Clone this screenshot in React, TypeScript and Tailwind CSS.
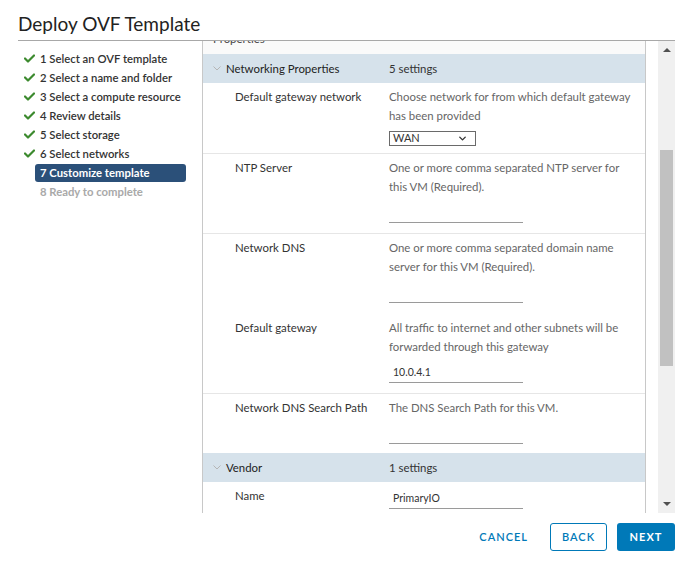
import { ChevronDown } from 'lucide-react';

const steps = [
  { label: '1 Select an OVF template', state: 'done' },
  { label: '2 Select a name and folder', state: 'done' },
  { label: '3 Select a compute resource', state: 'done' },
  { label: '4 Review details', state: 'done' },
  { label: '5 Select storage', state: 'done' },
  { label: '6 Select networks', state: 'done' },
  { label: '7 Customize template', state: 'active' },
  { label: '8 Ready to complete', state: 'todo' },
];

const Check = () => (
  <svg width="11" height="9" viewBox="0 0 11 9" fill="none">
    <path d="M1 4.5 L4 7.5 L10 1.5" stroke="#3c8a2e" strokeWidth="2.2" strokeLinecap="round" strokeLinejoin="round" />
  </svg>
);

const Caret = () => (
  <svg width="8" height="5" viewBox="0 0 8 5" fill="none" className="mr-[5px]">
    <path d="M0.5 0.5 L4 4 L7.5 0.5" stroke="#b5b5b5" strokeWidth="1" />
  </svg>
);

const Band = ({ title, count }: { title: string; count: string }) => (
  <div className="flex h-[29px] items-center bg-[#d6e2eb] text-[11.4px] text-[#222]">
    <div className="flex w-[186px] items-center pl-[10px]">
      <Caret />
      <span>{title}</span>
    </div>
    <span className="text-[#333]">{count}</span>
  </div>
);

const Input = ({ value }: { value?: string }) => (
  <div className="flex h-[20px] w-[134px] items-center border-b border-[#9a9a9a] pl-[4px] text-[10.5px] text-[#333]">
    {value}
  </div>
);

const Row = ({
  label,
  desc,
  value,
  line = true,
}: {
  label: string;
  desc: string[];
  value?: string;
  line?: boolean;
}) => (
  <div className={`flex pt-[4px] pb-[10px] ${line ? 'border-b border-[#e6e6e6]' : 'border-b border-transparent'}`}>
    <div className="w-[186px] pl-[32px] text-[11.4px] leading-[19px] text-[#333]">{label}</div>
    <div className="flex-1">
      <div className="text-[11.4px] leading-[19px] text-[#666]">
        {desc.map((d) => (
          <div key={d} className="whitespace-nowrap">
            {d}
          </div>
        ))}
      </div>
      <div className="mt-[7px]">
        <Input value={value} />
      </div>
    </div>
  </div>
);

export default function App() {
  return (
    <div className="relative h-[563px] w-[685px] overflow-hidden bg-white font-['Lato',sans-serif]">
      <div className="pl-[18px] pt-[12px] text-[19px] leading-[24px] text-[#222]">Deploy OVF Template</div>

      <div className="ml-[18px] mr-[10px] mt-[4px] border-t border-[#a8a8a8]" />

      <div className="flex h-[472px]">
        {/* Steps */}
        <div className="w-[202px] shrink-0 pl-[18px] pt-[8px]">
          {steps.map((s) => (
            <div key={s.label} className="flex h-[19px] items-center whitespace-nowrap">
              <div className="flex w-[17px] items-center pl-[6px]">{s.state === 'done' && <Check />}</div>
              <div
                className={
                  s.state === 'active'
                    ? 'w-[151px] rounded-[3px] bg-[#2b5079] px-[5px] text-[11.3px] font-bold leading-[18px] text-white'
                    : s.state === 'todo'
                    ? 'px-[5px] text-[11.3px] font-bold leading-[18px] text-[#a9a9a9]'
                    : 'px-[5px] text-[11.3px] font-semibold leading-[18px] text-[#333]'
                }
              >
                {s.label}
              </div>
            </div>
          ))}
        </div>

        {/* Properties panel */}
        <div className="w-[444px] shrink-0 overflow-hidden border-x border-[#c8c8c8]">
          <div className="h-[13px] overflow-hidden bg-[#fafafa] pl-[10px]">
            <div className="-mt-[12px] text-[11.4px] leading-[19px] text-[#444]">Properties</div>
          </div>
          <Band title="Networking Properties" count="5 settings" />

          <div className="flex border-b border-[#e6e6e6] pt-[4px] pb-[7px]">
            <div className="w-[186px] pl-[32px] text-[11.4px] leading-[19px] text-[#333]">Default gateway network</div>
            <div className="flex-1">
              <div className="text-[11.4px] leading-[19px] text-[#666]">
                <div>Choose network for from which default gateway</div>
                <div>has been provided</div>
              </div>
              <div className="mt-[6px] flex h-[15px] w-[87px] items-center justify-between border border-[#6a6a6a] pl-[3px] pr-[7px] text-[11px] text-[#333]">
                <span>WAN</span>
                <ChevronDown size={11} strokeWidth={3} className="text-[#333]" />
              </div>
            </div>
          </div>

          <Row label="NTP Server" desc={['One or more comma separated NTP server for', 'this VM (Required).']} />
          <Row
            label="Network DNS"
            desc={['One or more comma separated domain name', 'server for this VM (Required).']}
            line={false}
          />
          <Row
            label="Default gateway"
            desc={['All traffic to internet and other subnets will be', 'forwarded through this gateway']}
            value="10.0.4.1"
          />
          <div className="flex pt-[4px] pb-[9px]">
            <div className="w-[186px] pl-[32px] text-[11.4px] leading-[19px] text-[#333]">Network DNS Search Path</div>
            <div className="flex-1">
              <div className="text-[11.4px] leading-[19px] text-[#666]">The DNS Search Path for this VM.</div>
              <div className="mt-[7px]">
                <Input />
              </div>
            </div>
          </div>

          <Band title="Vendor" count="1 settings" />
          <div className="flex pt-[4px]">
            <div className="w-[186px] pl-[32px] text-[11.4px] leading-[19px] text-[#333]">Name</div>
            <div className="pt-[3px]">
              <Input value="PrimaryIO" />
            </div>
          </div>
        </div>

        {/* Scrollbar */}
        <div className="ml-[12px] flex w-[17px] shrink-0 flex-col items-center bg-[#f0f0f0]">
          <div className="flex h-[18px] items-center justify-center">
            <svg width="8" height="4" viewBox="0 0 8 4">
              <path d="M0 4 L4 0 L8 4 Z" fill="#505050" />
            </svg>
          </div>
          <div className="mt-[91px] h-[216px] w-[13px] bg-[#c1c1c1]" />
          <div className="flex-1" />
          <div className="flex h-[18px] items-center justify-center">
            <svg width="8" height="4" viewBox="0 0 8 4">
              <path d="M0 0 L8 0 L4 4 Z" fill="#505050" />
            </svg>
          </div>
        </div>
      </div>

      {/* Footer */}
      <div className="mr-[10px] mt-[10px] flex justify-end gap-[10px] text-[11px] font-semibold tracking-[1px]">
        <button className="h-[28px] px-[12px] text-[#0079b8]">CANCEL</button>
        <button className="h-[28px] w-[57px] rounded-[3px] border border-[#0079b8] text-[#0079b8]">BACK</button>
        <button className="h-[28px] w-[58px] rounded-[3px] bg-[#0079b8] font-bold text-white">NEXT</button>
      </div>
    </div>
  );
}
